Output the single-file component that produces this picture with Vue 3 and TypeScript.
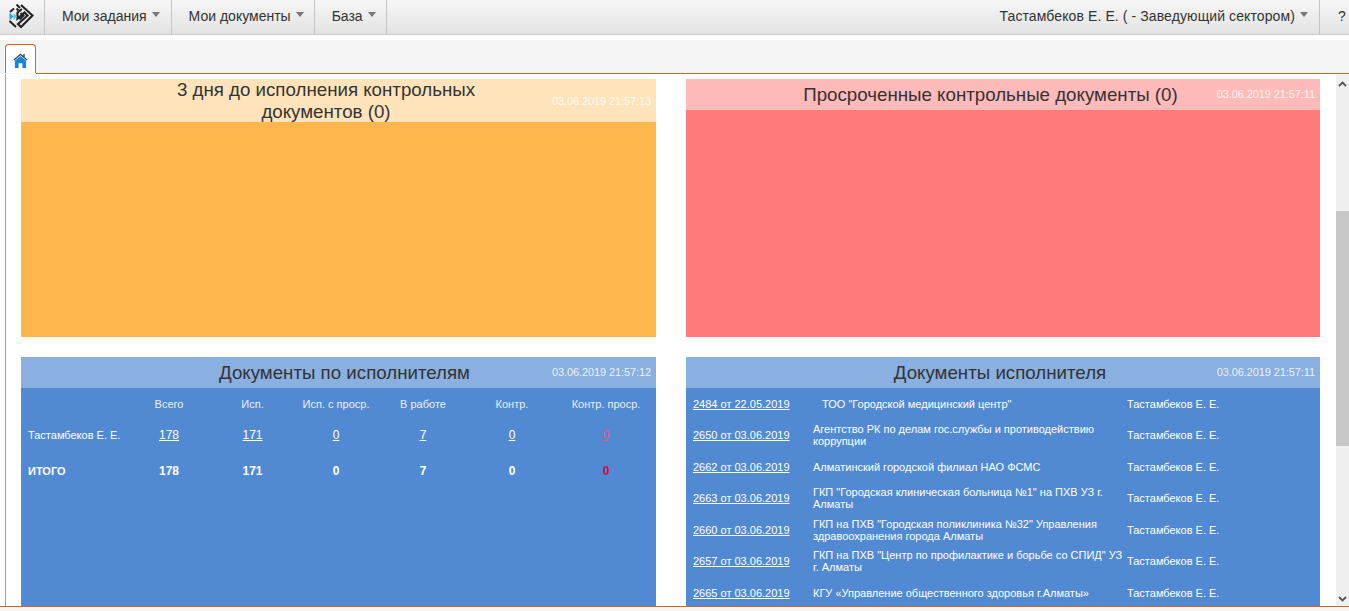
<template>
  <div class="page">
    <nav class="navbar">
      <a class="brand">
        <svg width="26" height="26" viewBox="0 0 26 26">
          <path d="M8.500 1.500 L12 5 M8.500 5.500 L10.500 7.500" stroke="#222" stroke-width="2" fill="none" />
          <path d="M2 9 L6 5.500 M1.500 18 L8 24" stroke="#222" stroke-width="2" fill="none" />
          <path d="M13 2 L24.500 12.500 L13 24 L10 21 L19.500 12.500 L16.500 9.500 L9.500 15.500 V9.500 L14 6" stroke="#222" stroke-width="2.200" fill="none" />
          <path d="M12.500 10 L15.500 12.500 L11.500 16.500" stroke="#222" stroke-width="2" fill="none" />
          <path d="M1.500 9.500 L5.500 13.500 L1.500 17.500Z" fill="#2f9fe0" />
          <path d="M5.500 10 L9 13.500 L5.500 17Z" fill="#5fc4ee" />
        </svg>
      </a>
      <a v-for="item in menu" :key="item" class="nav-item">{{ item }}<span class="caret"></span></a>
      <div class="nav-spacer"></div>
      <a class="nav-user">Тастамбеков Е. Е. ( - Заведующий сектором)<span class="caret"></span></a>
      <a class="nav-help">?</a>
    </nav>

    <div class="tabs">
      <div class="tab">
        <svg width="15" height="15" viewBox="0 0 16 16">
          <path d="M8 0.500 L0.500 7 L1.500 8 L8 2.500 L14.500 8 L15.500 7 L12.500 4.400 V1 H11 V3 Z" fill="#3b4a5a" />
          <path d="M8 3.200 L2 8.300 V16 H6 V11 H10 V16 H14 V8.300 Z" fill="#1683dc" />
        </svg>
      </div>
      <div class="tabs-rest"></div>
    </div>

    <div class="workspace">
      <main class="content">
        <section class="panel panel-warning">
          <header class="panel-head">
            <h3 class="panel-title title-soon">3 дня до исполнения контрольных документов (0)</h3>
            <span class="panel-date">03.06.2019 21:57:13</span>
          </header>
        </section>

        <section class="panel panel-danger">
          <header class="panel-head">
            <h3 class="panel-title title-overdue">Просроченные контрольные документы (0)</h3>
            <span class="panel-date">03.06.2019 21:57:11</span>
          </header>
        </section>

        <section class="panel panel-info">
          <header class="panel-head">
            <h3 class="panel-title title-stats">Документы по исполнителям</h3>
            <span class="panel-date">03.06.2019 21:57:12</span>
          </header>
          <table class="stats">
            <colgroup>
              <col style="width: 106px" />
              <col style="width: 84px" />
              <col style="width: 83px" />
              <col style="width: 84px" />
              <col style="width: 90px" />
              <col style="width: 88px" />
              <col />
            </colgroup>
            <thead>
              <tr>
                <th></th>
                <th v-for="col in statColumns" :key="col">{{ col }}</th>
              </tr>
            </thead>
            <tbody>
              <tr class="row-person">
                <td class="name">Тастамбеков Е. Е.</td>
                <td v-for="(val, i) in statValues" :key="i">
                  <a :class="{ overdue: i === 5 }">{{ val }}</a>
                </td>
              </tr>
              <tr class="row-total">
                <td class="name">ИТОГО</td>
                <td v-for="(val, i) in statValues" :key="i" :class="{ 'total-red': i === 5 }">{{ val }}</td>
              </tr>
            </tbody>
          </table>
        </section>

        <section class="panel panel-info">
          <header class="panel-head">
            <h3 class="panel-title title-docs">Документы исполнителя</h3>
            <span class="panel-date">03.06.2019 21:57:11</span>
          </header>
          <div class="doc-list">
            <div v-for="doc in docs" :key="doc.num" class="doc-row">
              <a class="doc-num">{{ doc.num }}</a>
              <div class="doc-org" :class="{ indented: doc.indented }">{{ doc.org }}</div>
              <div class="doc-person">Тастамбеков Е. Е.</div>
            </div>
          </div>
        </section>
      </main>

      <aside class="scrollbar">
        <svg class="arrow" width="9" height="6" viewBox="0 0 9 6">
          <path d="M1 5 L4.500 1.500 L8 5" stroke="#555" stroke-width="1.800" fill="none" />
        </svg>
        <div class="thumb"></div>
        <svg class="arrow arrow-down" width="9" height="6" viewBox="0 0 9 6">
          <path d="M1 1 L4.500 4.500 L8 1" stroke="#555" stroke-width="1.800" fill="none" />
        </svg>
      </aside>
    </div>
    <div class="bottom-bar"></div>
  </div>
</template>

<script setup lang="ts">
interface DocRow {
  num: string;
  org: string;
  indented?: boolean;
}

const menu: string[] = ['Мои задания', 'Мои документы', 'База'];
const statColumns: string[] = ['Всего', 'Исп.', 'Исп. с проср.', 'В работе', 'Контр.', 'Контр. проср.'];
const statValues: number[] = [178, 171, 0, 7, 0, 0];

const docs: DocRow[] = [
  { num: '2484 от 22.05.2019', org: 'ТОО "Городской медицинский центр"', indented: true },
  { num: '2650 от 03.06.2019', org: 'Агентство РК по делам гос.службы и противодействию коррупции' },
  { num: '2662 от 03.06.2019', org: 'Алматинский городской филиал НАО ФСМС' },
  { num: '2663 от 03.06.2019', org: 'ГКП "Городская клиническая больница №1" на ПХВ УЗ г. Алматы' },
  { num: '2660 от 03.06.2019', org: 'ГКП на ПХВ "Городская поликлиника №32" Управления здравоохранения города Алматы' },
  { num: '2657 от 03.06.2019', org: 'ГКП на ПХВ "Центр по профилактике и борьбе со СПИД" УЗ г. Алматы' },
  { num: '2665 от 03.06.2019', org: 'КГУ «Управление общественного здоровья г.Алматы»' },
];
</script>

<style>
html,
body {
  margin: 0;
  overflow: hidden;
  background: #fff;
}
</style>

<style scoped>
.page {
  height: 611px;
  display: flex;
  flex-direction: column;
  font-family: "Liberation Sans", Arial, sans-serif;
  overflow: hidden;
}

.navbar {
  height: 34px;
  flex-shrink: 0;
  display: flex;
  align-items: stretch;
  background: linear-gradient(to bottom, #f6f6f6, #e3e3e3);
  border-bottom: 1px solid #c8c8c8;
  font-size: 14px;
  color: #333;
}

.brand {
  width: 45px;
  box-sizing: border-box;
  padding: 3px 0 0 8px;
  border-right: 1px solid #c4c4c4;
}

.nav-item {
  display: flex;
  align-items: center;
  padding: 0 10px 3px 17px;
  border-right: 1px solid #c4c4c4;
}

.nav-item:nth-of-type(2) {
  padding-right: 11px;
}

.nav-spacer {
  flex: 1;
}

.nav-user {
  display: flex;
  align-items: center;
  padding: 0 11px 3px 0;
  border-right: 1px solid #c4c4c4;
  letter-spacing: 0.1px;
}

.nav-help {
  width: 29px;
  box-sizing: border-box;
  display: flex;
  align-items: center;
  padding: 0 0 3px 18px;
}

.caret {
  width: 0;
  height: 0;
  margin: 0 0 2px 5px;
  border-left: 4px solid transparent;
  border-right: 4px solid transparent;
  border-top: 5px solid #777;
}

.tabs {
  height: 34px;
  margin-top: 5px;
  flex-shrink: 0;
  display: flex;
  background: #f5f5f5;
}

.tab {
  width: 31px;
  height: 29px;
  margin: 4px 0 0 5px;
  padding-top: 8px;
  box-sizing: border-box;
  display: flex;
  justify-content: center;
  background: #fff;
  border: 1px solid #d2691e;
  border-bottom: none;
  border-radius: 4px 4px 0 0;
}

.tabs-rest {
  flex: 1;
  border-bottom: 1px solid #d2691e;
}

.workspace {
  flex: 1;
  min-height: 0;
  display: flex;
  margin-left: 5px;
  border-left: 1px solid #e0905a;
  overflow: hidden;
}

.content {
  flex: 1;
  min-width: 0;
  box-sizing: border-box;
  padding: 5px 16px 0 15px;
  display: grid;
  grid-template-columns: 635px 634px;
  grid-template-rows: 258px 260px;
  column-gap: 30px;
  row-gap: 20px;
  overflow: hidden;
}

.panel {
  display: flex;
  flex-direction: column;
  min-height: 0;
}

.panel-warning {
  background: #ffb74d;
}

.panel-warning .panel-head {
  height: 43px;
  background: #ffe3bb;
}

.panel-warning .panel-date {
  margin-top: 0;
}

.panel-danger {
  background: #ff7b7b;
}

.panel-danger .panel-head {
  background: #ffbaba;
}

.panel-info {
  background: #518ad2;
  color: #fff;
}

.panel-info .panel-head {
  background: #8ab0e1;
}

.panel-head {
  position: relative;
  height: 31px;
  display: flex;
  justify-content: center;
  align-items: center;
  flex-shrink: 0;
}

.panel-title {
  margin: 0;
  padding-top: 1px;
  font-size: 18.720px;
  font-weight: normal;
  line-height: 22px;
  color: #333;
  text-align: center;
}

.title-soon {
  width: 340px;
  margin-right: 25px;
}

.title-overdue {
  margin-right: 25px;
}

.title-stats {
  margin-left: 12px;
}

.title-docs {
  margin-right: 6px;
}

.panel-date {
  position: absolute;
  right: 5px;
  top: 50%;
  transform: translateY(-50%);
  font-size: 11px;
  letter-spacing: -0.1px;
  color: rgba(255, 255, 255, 0.85);
  margin-top: -1px;
}

.stats {
  width: 100%;
  table-layout: fixed;
  border-collapse: collapse;
  font-size: 11px;
}

.stats th {
  height: 32px;
  padding: 0;
  font-weight: normal;
  text-align: center;
  color: #e8f0fa;
}

.stats td {
  padding: 0;
  text-align: center;
}

.row-person td {
  height: 30px;
}

.row-person a {
  font-size: 12px;
  color: #fff;
  text-decoration: underline;
}

.row-person a.overdue {
  color: #d9647f;
}

.row-total td {
  height: 42px;
  font-size: 12px;
  font-weight: bold;
}

.stats td.name {
  padding-left: 7px;
  text-align: left;
  font-size: 11px;
  white-space: nowrap;
}

.stats td.total-red {
  color: #c8102e;
}

.doc-list {
  display: flex;
  flex-direction: column;
  font-size: 11px;
  line-height: 12px;
}

.doc-row {
  height: 31.500px;
  flex-shrink: 0;
  display: grid;
  grid-template-columns: 120px 314px 1fr;
  align-items: center;
  padding-left: 7px;
}

.doc-num {
  color: #fff;
  text-decoration: underline;
  white-space: nowrap;
}

.doc-org.indented {
  padding-left: 9px;
}

.scrollbar {
  width: 13px;
  flex-shrink: 0;
  position: relative;
  background: #f0f0f0;
  display: flex;
  flex-direction: column;
  align-items: center;
}

.arrow {
  position: absolute;
  top: 7px;
}

.arrow-down {
  top: auto;
  bottom: 4px;
}

.thumb {
  width: 100%;
  height: 235px;
  margin-top: 137px;
  background: #c8c8c8;
}

.bottom-bar {
  height: 4px;
  flex-shrink: 0;
  background: #f5f5f5;
  border-top: 1px solid #d2691e;
}
</style>
